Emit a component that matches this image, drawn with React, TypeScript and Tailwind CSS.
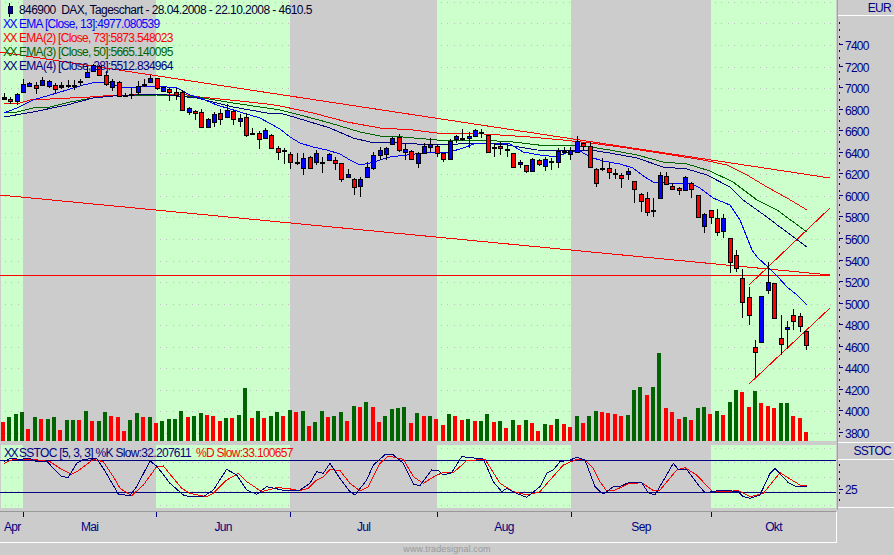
// DAX daily chart, all chart coordinates are page pixels
const greenBands = [
  [1, 23],
  [156, 290],
  [437, 571],
  [711, 836],
];

// top, bottom, wick top, wick bottom, colour
const candles: [number, number, number, number, string][] = [
  [97, 99, 93, 100, "k"], [99, 101, 97, 104, "r"], [94, 101, 93, 105, "b"], [84, 92, 79, 93, "b"], [83, 86, 82, 87, "b"],
  [85, 88, 82, 94, "r"], [80, 85, 77, 86, "b"], [81, 86, 80, 88, "b"], [85, 89, 83, 94, "r"], [85, 87, 82, 89, "k"],
  [85, 85, 80, 88, "k"], [85, 85, 80, 90, "k"], [81, 81, 79, 86, "k"], [72, 77, 67, 78, "b"], [65, 71, 64, 72, "b"],
  [66, 75, 65, 76, "r"], [75, 84, 71, 86, "r"], [81, 87, 79, 91, "b"], [82, 96, 81, 96, "r"], [95, 96, 93, 97, "k"],
  [94, 94, 88, 99, "k"], [86, 92, 81, 95, "b"], [84, 84, 79, 87, "k"], [78, 82, 75, 83, "b"], [78, 88, 78, 90, "r"],
  [87, 91, 86, 92, "b"], [89, 92, 88, 101, "r"], [92, 95, 88, 100, "r"], [92, 110, 90, 111, "r"], [108, 112, 107, 115, "b"],
  [111, 113, 110, 120, "r"], [112, 127, 109, 128, "r"], [119, 127, 118, 127, "b"], [114, 122, 112, 127, "b"], [113, 119, 109, 125, "r"],
  [110, 117, 104, 117, "b"], [111, 119, 110, 125, "r"], [118, 121, 114, 127, "b"], [117, 135, 113, 137, "r"], [133, 133, 128, 135, "k"],
  [133, 139, 131, 149, "r"], [130, 138, 128, 138, "b"], [135, 148, 134, 149, "r"], [148, 152, 146, 160, "r"], [150, 151, 148, 164, "k"],
  [154, 162, 152, 169, "r"], [162, 162, 153, 165, "k"], [158, 168, 153, 175, "b"], [157, 168, 156, 169, "r"], [153, 162, 150, 165, "b"],
  [162, 162, 157, 173, "k"], [154, 160, 153, 161, "b"], [160, 163, 157, 170, "r"], [163, 179, 163, 182, "r"], [174, 177, 169, 178, "b"],
  [179, 187, 178, 195, "r"], [179, 186, 177, 197, "b"], [167, 177, 162, 178, "b"], [155, 168, 152, 170, "b"], [150, 155, 147, 160, "b"],
  [148, 154, 147, 160, "b"], [138, 144, 137, 145, "b"], [137, 150, 134, 152, "r"], [149, 152, 143, 160, "b"], [151, 159, 150, 160, "r"],
  [153, 163, 152, 168, "b"], [146, 153, 143, 153, "b"], [144, 147, 138, 152, "b"], [146, 153, 144, 157, "r"], [153, 159, 153, 162, "r"],
  [141, 159, 139, 160, "b"], [136, 139, 135, 143, "b"], [138, 138, 129, 141, "k"], [136, 138, 132, 148, "b"], [130, 136, 129, 137, "b"],
  [132, 133, 129, 138, "r"], [135, 152, 135, 152, "r"], [147, 147, 143, 157, "k"], [146, 148, 142, 155, "r"], [149, 149, 143, 157, "k"],
  [153, 167, 153, 168, "r"], [162, 164, 160, 168, "b"], [165, 171, 165, 173, "r"], [159, 171, 158, 172, "b"], [160, 164, 159, 166, "r"],
  [159, 166, 157, 171, "b"], [161, 161, 158, 170, "k"], [151, 162, 148, 168, "b"], [151, 151, 147, 153, "k"], [150, 154, 147, 160, "b"],
  [141, 152, 136, 153, "b"], [143, 146, 142, 150, "r"], [146, 167, 142, 168, "r"], [169, 183, 168, 187, "r"], [168, 168, 158, 171, "k"],
  [168, 172, 162, 179, "r"], [173, 173, 169, 179, "k"], [175, 178, 173, 188, "r"], [171, 174, 168, 180, "b"], [181, 189, 181, 203, "r"],
  [194, 201, 193, 212, "r"], [198, 212, 192, 216, "r"], [210, 210, 198, 217, "k"], [175, 198, 172, 198, "b"], [176, 184, 172, 185, "r"],
  [186, 189, 183, 190, "r"], [188, 190, 187, 195, "r"], [177, 190, 176, 191, "b"], [183, 189, 182, 198, "r"], [195, 217, 195, 218, "r"],
  [214, 226, 213, 233, "b"], [210, 217, 210, 224, "r"], [218, 232, 209, 236, "r"], [218, 231, 214, 238, "b"], [238, 262, 238, 273, "r"],
  [255, 268, 250, 272, "r"], [278, 302, 269, 318, "r"], [297, 315, 287, 325, "r"], [347, 352, 340, 377, "r"], [296, 342, 296, 343, "b"],
  [282, 290, 262, 294, "b"], [283, 318, 283, 319, "r"], [338, 344, 315, 355, "r"], [327, 329, 321, 349, "b"], [315, 321, 309, 330, "r"],
  [316, 326, 313, 332, "r"], [331, 345, 331, 350, "r"],
];

// positive = green, negative = red
const volumes = [
  -19, 24, 27, 29, -12, 24, -22, 22, 24, -11, 21, 21, -21, 30, -20, 20, 29, -25, -24, -10, 21, 28, -24, 24, -18, 20, 22, 22, 30, -24, 25, 28,
  -26, -25, -20, 23, -23, 26, 53, -23, 30, -23, 25, 29, -25, 31, -29, 30, -15, 19, 30, -24, 25, 29, -20, 35, -34, 39, -34, -19, 25, 32, 33,
  34, -18, 28, -25, 25, -22, -16, 27, -25, -21, 22, -20, 20, 27, -19, 20, -13, 21, -16, 21, -18, -10, 17, -16, 22, -17, -14, 25, -18, 25, 30,
  -29, -28, -27, -25, 26, 51, 54, -46, 54, 88, -33, -29, -22, 24, -21, 33, 34, -27, 30, -26, 39, 51, -49, -34, 50, -38, -35, -33, 38, 38, -25, -23, -9,
];

const ema13 = "4,113 17,108 33,100 57,93 83,85 97,82 110,83 123,88 140,87 157,86 177,88 190,95 200,98 217,105 240,112 260,118 280,129 290,137 300,143 313,147 327,150 340,154 350,160 360,165 370,163 380,160 390,157 407,155 423,153 437,152 450,152 463,148 477,143 493,143 510,144 523,152 540,155 557,157 570,151 580,151 590,157 603,161 620,164 633,168 645,177 653,182 667,183 680,184 690,183 700,188 713,198 730,205 740,220 752,250 757,257 768,267 778,277 787,287 797,295 807,305";
const ema73 = "4,103 20,103 30,100 90,97 103,96 157,94 187,95 200,97 240,101 267,104 280,106 313,113 347,122 380,128 413,130 437,133 467,133 500,135 530,137 563,140 590,143 620,147 653,152 703,160 727,165 747,175 767,187 787,198 807,210";
const ema50 = "4,113 17,112 33,108 50,107 70,102 93,98 113,96 157,95 197,97 233,103 267,108 280,110 300,115 330,123 360,132 380,136 403,137 437,140 480,140 513,142 547,146 570,145 590,147 610,150 637,155 663,162 687,164 710,171 733,182 757,200 777,210 807,232";
const ema28 = "4,117 33,112 67,105 93,98 113,96 157,94 197,98 233,107 267,113 280,113 297,118 330,128 353,138 370,142 397,143 437,145 480,143 507,145 537,150 580,151 590,150 610,153 637,158 663,167 687,169 707,175 730,187 743,200 760,212 780,227 807,247";

const toPage = (ox: number, pts: number[][]) =>
  pts.map(([x, y]) => `${ox + x / 3},${380 + y / 3}`).join(" ");

const stochK = [
  toPage(0, [[12, 245], [30, 235], [60, 238], [90, 235], [110, 245], [140, 243], [160, 265], [185, 290], [205, 292], [230, 250], [250, 238], [290, 235], [310, 265], [355, 342], [390, 347], [410, 320], [450, 243], [470, 258], [510, 310], [550, 345], [570, 350], [610, 350], [640, 330], [680, 268], [710, 285], [740, 330], [770, 343], [800, 320], [860, 333]]),
  toPage(300, [[0, 330], [30, 310], [50, 275], [70, 280], [90, 250], [120, 295], [150, 335], [165, 345], [200, 300], [220, 255], [255, 224], [280, 225], [310, 250], [340, 312], [360, 317], [395, 270], [415, 272], [430, 285], [455, 278], [485, 230], [550, 237], [580, 305], [605, 335], [620, 325], [650, 340], [680, 352], [720, 320], [740, 280], [760, 270], [780, 245], [810, 240], [830, 232], [855, 240], [885, 320]]),
  toPage(600, [[0, 335], [10, 342], [40, 320], [60, 320], [85, 308], [125, 308], [145, 338], [165, 345], [220, 250], [235, 268], [260, 268], [295, 315], [315, 338], [370, 330], [415, 335], [430, 350], [450, 355], [480, 345], [510, 280], [525, 265], [565, 308], [585, 318], [620, 318]]),
].join(" ");

const stochD = [
  toPage(0, [[12, 250], [40, 238], [100, 238], [150, 245], [180, 265], [215, 283], [235, 272], [280, 238], [310, 245], [340, 290], [360, 325], [395, 347], [430, 315], [470, 260], [490, 258], [545, 325], [570, 340], [620, 350], [640, 340], [680, 300], [715, 280], [740, 305], [785, 335], [830, 323], [860, 325]]),
  toPage(300, [[0, 332], [25, 325], [50, 300], [70, 290], [90, 268], [120, 272], [150, 310], [180, 333], [205, 320], [240, 250], [265, 228], [310, 238], [340, 290], [370, 310], [410, 285], [430, 278], [460, 278], [500, 242], [555, 238], [600, 310], [640, 335], [680, 345], [720, 335], [750, 300], [790, 255], [830, 238], [855, 240], [880, 265]]),
  toPage(600, [[0, 305], [20, 333], [45, 330], [85, 312], [125, 308], [160, 332], [180, 330], [230, 270], [255, 263], [290, 285], [335, 333], [370, 335], [415, 332], [450, 350], [490, 340], [540, 278], [575, 300], [600, 315], [620, 318]]),
].join(" ");

const priceLevels = Array.from({ length: 19 }, (_, i) => 7400 - i * 200);
const levelY = (v: number) => Math.round(45 + (7400 - v) * 0.10778);

const months = [
  { name: "Apr", width: "w-[23px]" },
  { name: "Mai", width: "w-[133px]" },
  { name: "Jun", width: "w-[134px]" },
  { name: "Jul", width: "w-[147px]" },
  { name: "Aug", width: "w-[134px]" },
  { name: "Sep", width: "w-[140px]" },
  { name: "Okt", width: "w-[125px]" },
];

const legend = [
  { text: "EMA [Close, 13]:4977.080539", color: "text-[#0000ff]" },
  { text: "EMA(2) [Close, 73]:5873.548023", color: "text-[#ff0000]" },
  { text: "EMA(3) [Close, 50]:5665.140095", color: "text-[#006400]" },
  { text: "EMA(4) [Close, 28]:5512.834964", color: "text-[#000080]" },
];

function GridDots({ ys }: { ys: number[] }) {
  return (
    <>
      {greenBands.map(([a, b]) =>
        ys.map((y) => (
          <line key={`${a}-${y}`} x1={a + 4} x2={b} y1={y + 0.5} y2={y + 0.5} stroke="#c4b8c4" strokeDasharray="1 5.4" />
        )),
      )}
    </>
  );
}

function Bands({ top, bottom }: { top: number; bottom: number }) {
  return (
    <>
      {greenBands.map(([a, b]) => (
        <rect key={a} x={a} y={top} width={b - a} height={bottom - top} fill="#ccffcc" />
      ))}
    </>
  );
}

function PriceChart() {
  return (
    <svg className="block h-[441px] w-[836px]" viewBox="0 0 836 441" shapeRendering="crispEdges">
      <Bands top={0} bottom={441} />
      <GridDots ys={[2, 23, ...priceLevels.map(levelY)]} />
      {volumes.map((v, i) => {
        const h = Math.abs(v);
        return (
          <rect key={i} x={Math.round(1 + i * 6.373)} y={441 - h} width={4} height={h} fill={v > 0 ? "#006400" : "#ff0000"} />
        );
      })}
      <polyline points="0,52 830,178" fill="none" stroke="#ff0000" />
      <polyline points="0,195 830,275" fill="none" stroke="#ff0000" />
      <line x1={0} x2={830} y1={275} y2={275} stroke="#ff0000" />
      <polyline points="749,285 830,208" fill="none" stroke="#ff0000" />
      <polyline points="749,384 830,308" fill="none" stroke="#ff0000" />
      <polyline points={ema73} fill="none" stroke="#ff0000" />
      <polyline points={ema50} fill="none" stroke="#006400" />
      <polyline points={ema28} fill="none" stroke="#000080" />
      <polyline points={ema13} fill="none" stroke="#0000ff" />
      {candles.map(([top, bottom, wickTop, wickBottom, c], i) => {
        const x = Math.round(4 + i * 6.365);
        const fill = c === "r" ? "#ff0000" : c === "b" ? "#0000ff" : "#000000";
        return (
          <g key={i}>
            <line x1={x + 0.5} x2={x + 0.5} y1={wickTop} y2={wickBottom} stroke="#000000" />
            <rect x={x - 1.5} y={top + 0.5} width={4} height={Math.max(bottom - top, 1)} fill={fill} stroke="#000000" />
          </g>
        );
      })}
    </svg>
  );
}

function StochChart() {
  return (
    <svg className="block h-[63px] w-[836px]" viewBox="0 445 836 63" shapeRendering="crispEdges">
      <Bands top={445} bottom={508} />
      <GridDots ys={[448, 462, 477, 491, 505]} />
      <line x1={0} x2={836} y1={460.5} y2={460.5} stroke="#000080" />
      <line x1={0} x2={836} y1={492.5} y2={492.5} stroke="#000080" />
      <polyline points={stochD} fill="none" stroke="#ff0000" />
      <polyline points={stochK} fill="none" stroke="#000080" />
    </svg>
  );
}

function AxisDots({ top, bottom }: { top: number; bottom: number }) {
  const dots = [];
  for (let y = top; y < bottom; y += 7) dots.push(y);
  return (
    <>
      {dots.map((y) => (
        <rect key={y} x={839} y={y} width={1} height={2} fill="#000080" />
      ))}
    </>
  );
}

function PriceAxis() {
  return (
    <svg className="block h-[426px] w-[56px]" viewBox="838 17 56 426" shapeRendering="crispEdges">
      <AxisDots top={23} bottom={441} />
      {priceLevels.map((v) => (
        <g key={v}>
          <rect x={839} y={levelY(v)} width={4} height={1} fill="#000080" />
          <text x={845} y={levelY(v) + 5.5} fontSize={12} letterSpacing={-0.75} fill="#000080">
            {v}
          </text>
        </g>
      ))}
    </svg>
  );
}

function StochAxis() {
  return (
    <svg className="block h-[47px] w-[56px]" viewBox="838 462 56 47" shapeRendering="crispEdges">
      <AxisDots top={466} bottom={508} />
      <rect x={839} y={491} width={4} height={1} fill="#000080" />
      <text x={845} y={496} fontSize={12} letterSpacing={-0.75} fill="#000080">
        25
      </text>
    </svg>
  );
}

export default function App() {
  return (
    <div className="flex h-[555px] w-[894px] flex-col overflow-hidden bg-[#cccccc] font-['Liberation_Sans',sans-serif] text-[12px] leading-[14px] tracking-[-0.7px] text-[#000080]">
      <div className="flex h-[543px]">
        <div className="flex w-[837px] flex-col">
          <div className="relative h-[441px]">
            <PriceChart />
            <div className="absolute left-0 top-[3px] flex flex-col">
              <div className="flex items-center tracking-[-0.56px] text-[#000033]">
                <svg className="h-[14px] w-[19px]" viewBox="0 0 19 14" shapeRendering="crispEdges">
                  <rect x={9} y={0} width={1} height={14} fill="#000000" />
                  <rect x={8} y={3} width={4} height={7} fill="#0000aa" stroke="#000033" />
                </svg>
                <span className="whitespace-nowrap">846900&nbsp; DAX, Tageschart - 28.04.2008 - 22.10.2008 - 4610.5</span>
              </div>
              {legend.map((row) => (
                <div key={row.text} className={`flex whitespace-nowrap pl-[3px] ${row.color}`}>
                  <span className="w-[16px] tracking-[-1.5px]">XX</span>
                  <span>{row.text}</span>
                </div>
              ))}
            </div>
          </div>
          <div className="relative mt-[4px] h-[63px]">
            <StochChart />
            <div className="absolute left-[4px] top-[1px] flex whitespace-nowrap">
              <span className="w-[15px] tracking-[-1.5px]">XX</span>
              <span>SSTOC [5, 3, 3] %K Slow:32.207611</span>
              <span className="ml-[5px] text-[#ff0000]">%D Slow:33.100657</span>
            </div>
          </div>
          <div className="mt-[3px] flex h-[32px] border-y border-r border-b-white border-r-white border-t-[#999999]">
            {months.map((m, i) => (
              <div key={m.name} className={`flex flex-col ${m.width}`}>
                <div className={i === 0 ? "h-[5px]" : "h-[5px] w-px bg-[#000080]"} />
                <div className={i === 0 ? "mt-[3px] whitespace-nowrap pl-[4px]" : "mt-[3px] text-center"}>{m.name}</div>
              </div>
            ))}
          </div>
        </div>
        <div className="flex h-[510px] w-[57px] flex-col border-l border-[#a0a0a0]">
          <div className="h-[16px] border-b border-white pr-[3px] text-right leading-[17px]">EUR</div>
          <PriceAxis />
          <div className="h-[18px] border-y border-white pr-[3px] text-right leading-[17px]">SSTOC</div>
          <StochAxis />
          <div className="h-px bg-white" />
        </div>
      </div>
      <div className="text-center text-[9px] leading-[12px] tracking-[0.12px] text-[#999999]">www.tradesignal.com</div>
    </div>
  );
}
